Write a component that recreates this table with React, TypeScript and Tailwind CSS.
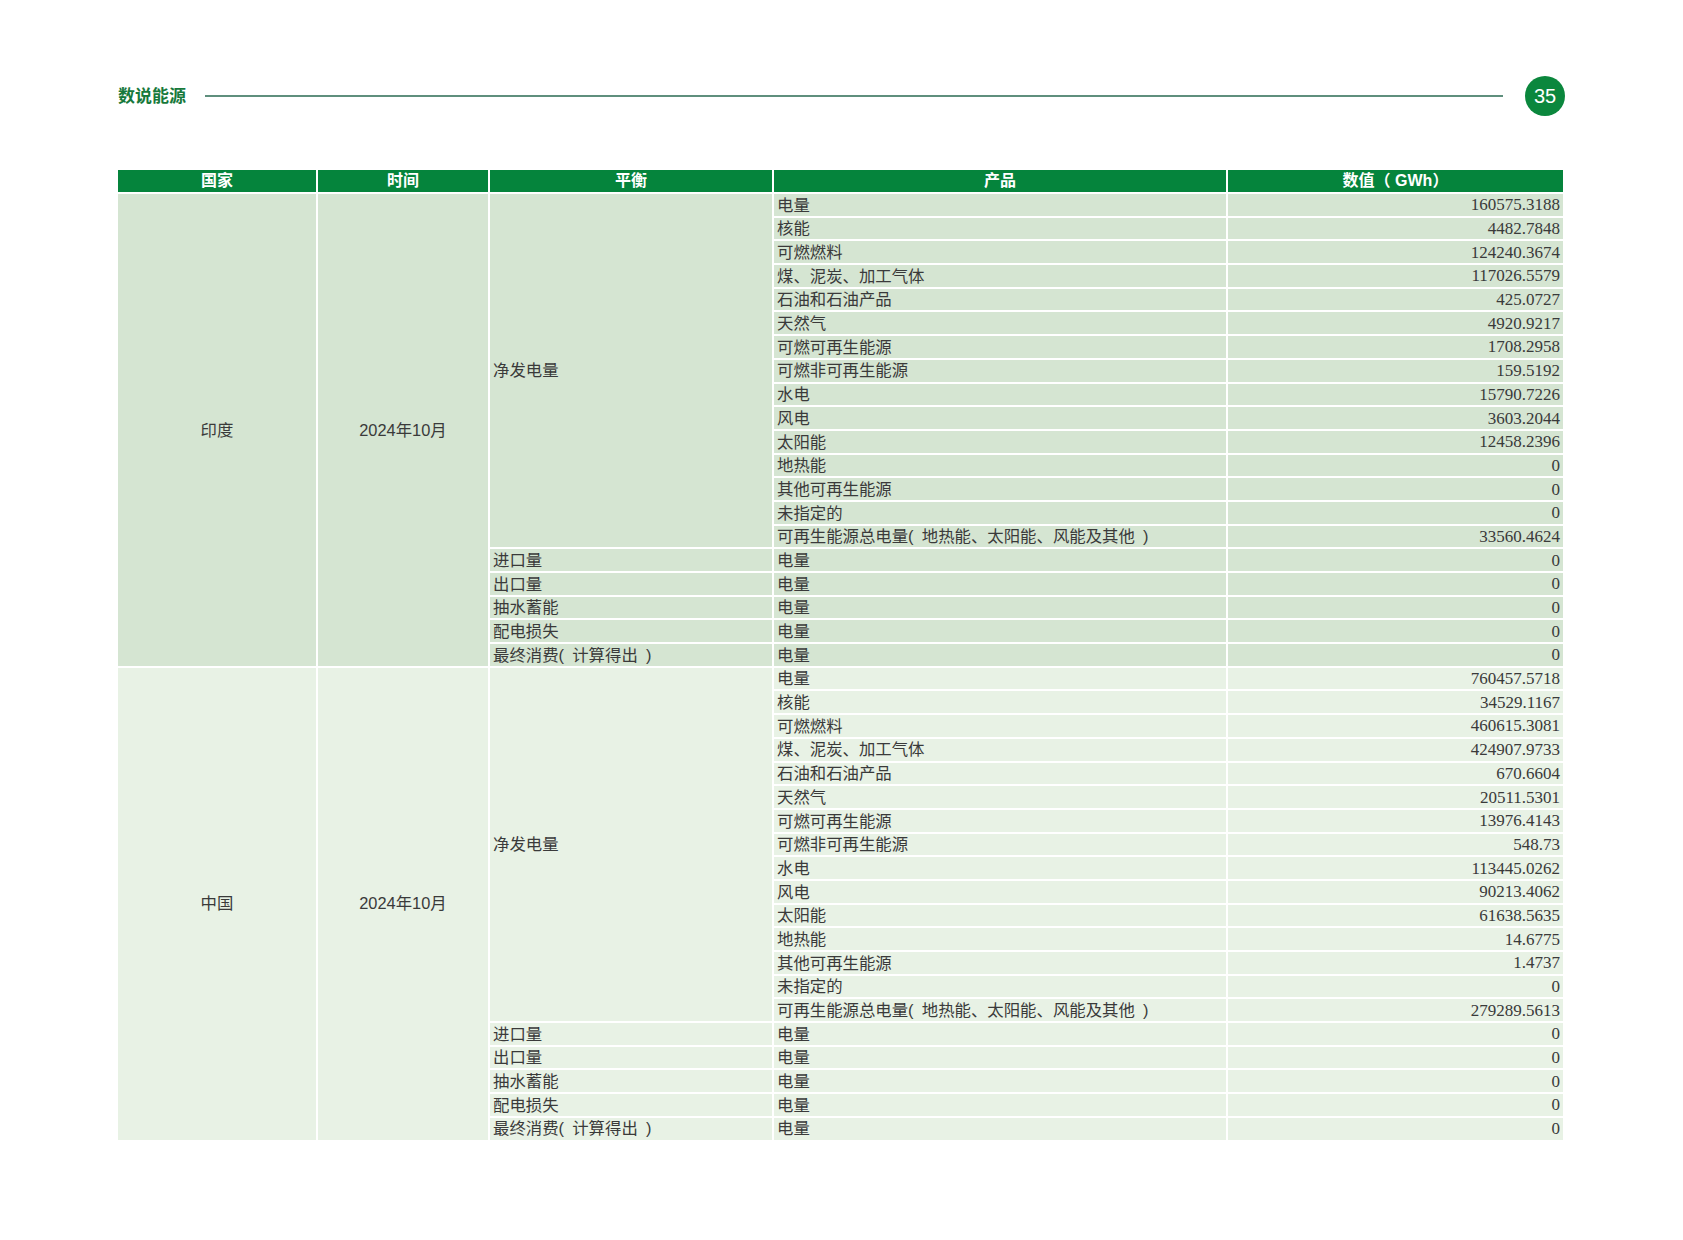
const india = {
  country: '印度',
  month: '2024年10月',
  values: [
    ['电量', '160575.3188'],
    ['核能', '4482.7848'],
    ['可燃燃料', '124240.3674'],
    ['煤、泥炭、加工气体', '117026.5579'],
    ['石油和石油产品', '425.0727'],
    ['天然气', '4920.9217'],
    ['可燃可再生能源', '1708.2958'],
    ['可燃非可再生能源', '159.5192'],
    ['水电', '15790.7226'],
    ['风电', '3603.2044'],
    ['太阳能', '12458.2396'],
    ['地热能', '0'],
    ['其他可再生能源', '0'],
    ['未指定的', '0'],
    ['可再生能源总电量(\u2002地热能、太阳能、风能及其他\u2002)', '33560.4624'],
  ],
  others: [
    ['进口量', '0'],
    ['出口量', '0'],
    ['抽水蓄能', '0'],
    ['配电损失', '0'],
    ['最终消费(\u2002计算得出\u2002)', '0'],
  ],
}

const china = {
  country: '中国',
  month: '2024年10月',
  values: [
    ['电量', '760457.5718'],
    ['核能', '34529.1167'],
    ['可燃燃料', '460615.3081'],
    ['煤、泥炭、加工气体', '424907.9733'],
    ['石油和石油产品', '670.6604'],
    ['天然气', '20511.5301'],
    ['可燃可再生能源', '13976.4143'],
    ['可燃非可再生能源', '548.73'],
    ['水电', '113445.0262'],
    ['风电', '90213.4062'],
    ['太阳能', '61638.5635'],
    ['地热能', '14.6775'],
    ['其他可再生能源', '1.4737'],
    ['未指定的', '0'],
    ['可再生能源总电量(\u2002地热能、太阳能、风能及其他\u2002)', '279289.5613'],
  ],
  others: [
    ['进口量', '0'],
    ['出口量', '0'],
    ['抽水蓄能', '0'],
    ['配电损失', '0'],
    ['最终消费(\u2002计算得出\u2002)', '0'],
  ],
}

type Block = typeof india

const cjk = "font-['Liberation_Sans','Noto_Sans_CJK_SC',sans-serif]"
const num = "font-['Liberation_Serif','Noto_Sans_CJK_SC',serif]"

function CountryBlock({ data, bg }: { data: Block; bg: string }) {
  return (
    <>
      <div className={`${bg} row-span-20 flex items-center justify-center`}>{data.country}</div>
      <div className={`${bg} row-span-20 flex items-center justify-center`}>{data.month}</div>
      <div className={`${bg} row-span-15 flex items-center pl-[3px]`}>净发电量</div>
      {data.values.map(([product, value]) => (
        <Row key={product} product={product} value={value} bg={bg} />
      ))}
      {data.others.map(([balance, value]) => (
        <Row key={balance} balance={balance} product="电量" value={value} bg={bg} />
      ))}
    </>
  )
}

function Row({ balance, product, value, bg }: { balance?: string; product: string; value: string; bg: string }) {
  return (
    <>
      {balance && <div className={`${bg} flex items-center pl-[3px]`}>{balance}</div>}
      <div className={`${bg} flex items-center pl-[3px]`}>{product}</div>
      <div className={`${bg} ${num} flex items-center justify-end pr-[3px] text-[17px]`}>{value}</div>
    </>
  )
}

export default function App() {
  return (
    <div className={`min-h-screen w-[1683px] bg-white ${cjk}`}>
      {/* Page header */}
      <div className="flex items-center pl-[118px] pr-[118px] pt-[76px]">
        <span className="text-[17px] font-bold text-[#17793b] leading-none">数说能源</span>
        <div className="ml-[19px] mr-[22px] h-[1.5px] flex-1 bg-[#5f8f7d]" />
        <div className="flex h-[40px] w-[40px] items-center justify-center rounded-full bg-[#0b873d] text-[20px] text-white">
          35
        </div>
      </div>

      {/* Table */}
      <div className="mt-[54px] ml-[118px] grid w-[1445px] grid-cols-[198px_170px_282px_452px_335px] grid-rows-[22px_repeat(40,21.7px)] gap-[2px] text-[16.4px] leading-none text-[#3a3a3a]">
        {['国家', '时间', '平衡', '产品', '数值（ GWh）'].map((h) => (
          <div key={h} className="flex items-center justify-center bg-[#05843c] text-[16px] font-bold text-white">
            {h}
          </div>
        ))}
        <CountryBlock data={india} bg="bg-[#d5e5d2]" />
        <CountryBlock data={china} bg="bg-[#e8f2e5]" />
      </div>
    </div>
  )
}
